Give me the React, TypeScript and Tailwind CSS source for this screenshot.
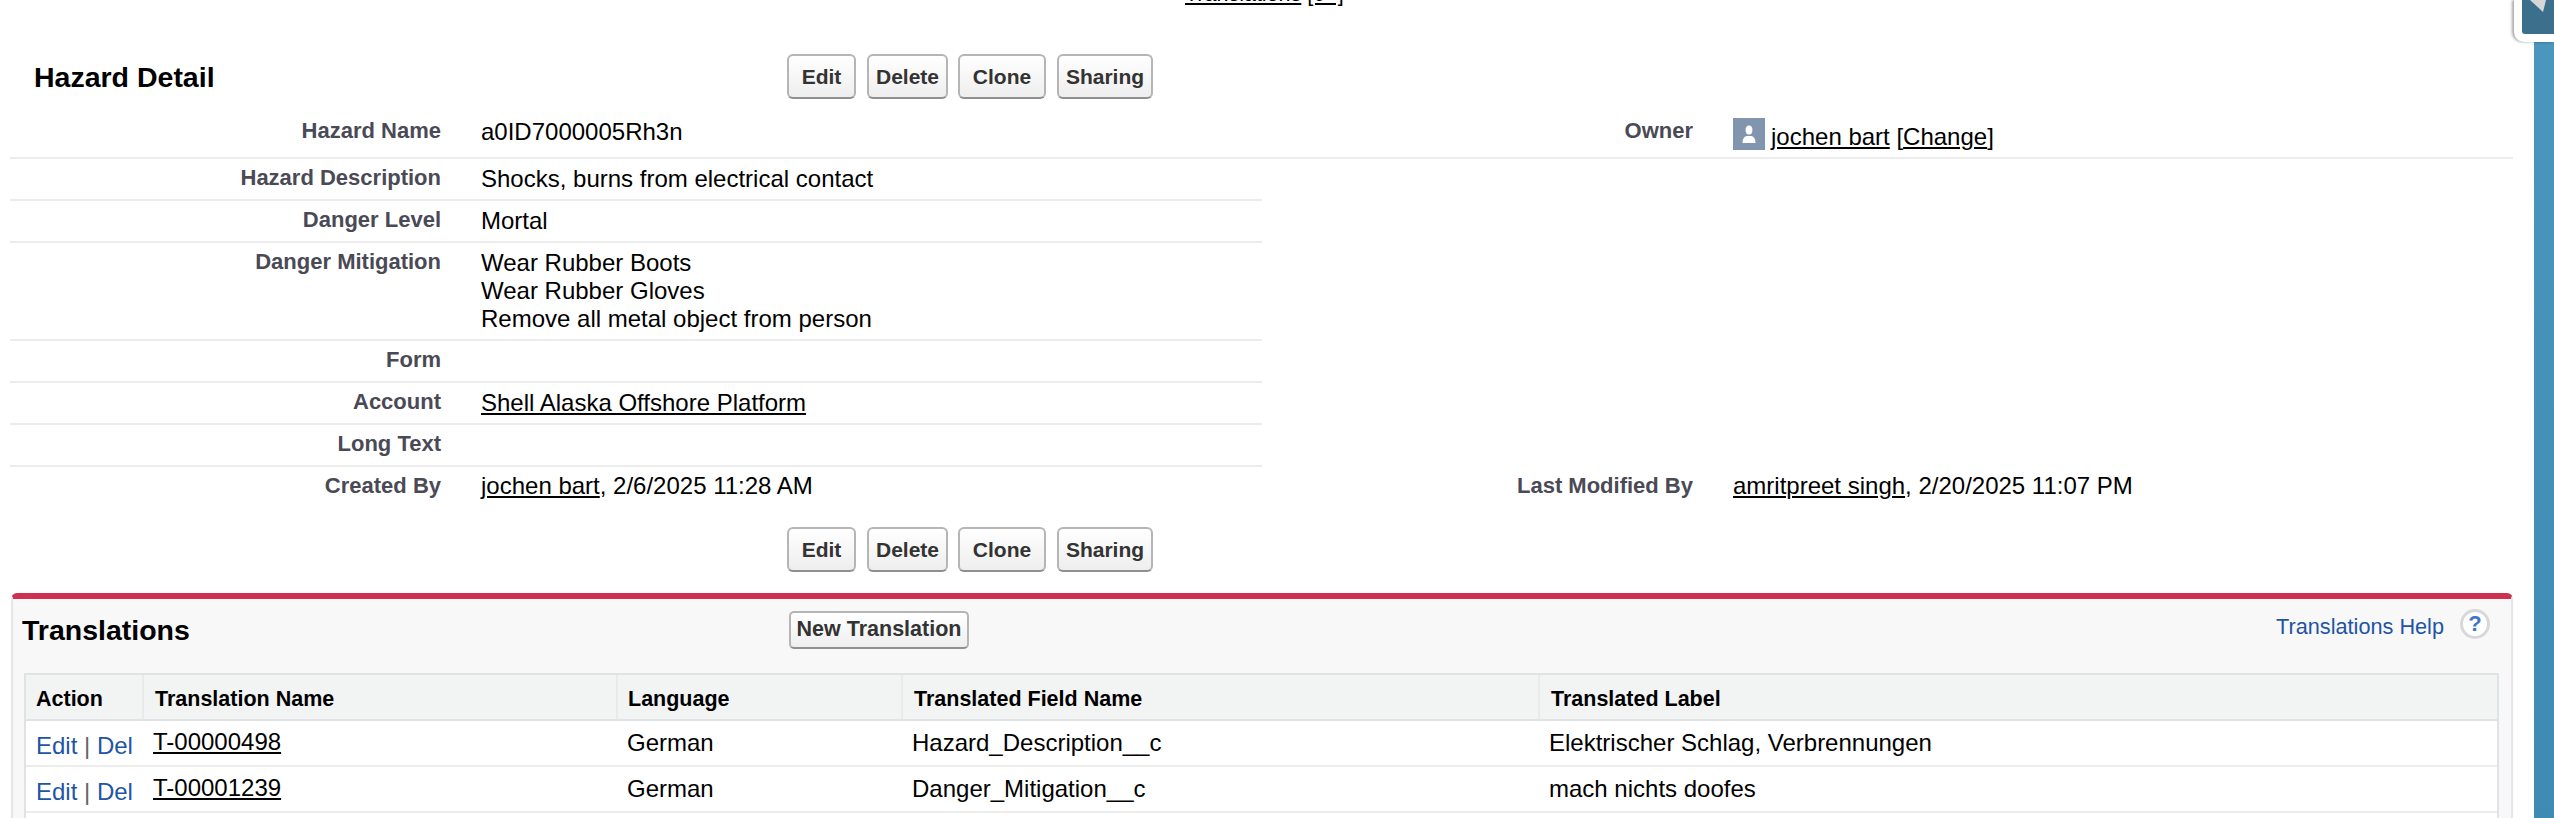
import React from "react";

const Btn = ({ label, cls }: { label: string; cls: string }) => (
  <button className={`h-[45px] rounded-[6px] border-2 border-[#b5b5b5] border-b-[#8f8f8f] bg-gradient-to-b from-[#ffffff] to-[#eeeeee] text-[21px] leading-none font-bold text-[#333333] ${cls}`}>
    {label}
  </button>
);

const Buttons = () => (
  <div className="flex">
    <Btn label="Edit" cls="w-[69px]" />
    <Btn label="Delete" cls="w-[81px] ml-[11px]" />
    <Btn label="Clone" cls="w-[88px] ml-[10px]" />
    <Btn label="Sharing" cls="w-[96px] ml-[11px]" />
  </div>
);

const A = ({ children }: { children: React.ReactNode }) => (
  <a className="underline decoration-2 underline-offset-2 text-black">{children}</a>
);

const Row = ({ label, children, h = "h-[42px]", line = true }: { label: string; children?: React.ReactNode; h?: string; line?: boolean }) => (
  <div className={`flex w-[1252px] ${h} ${line ? "border-b-2 border-[#ececec]" : ""}`}>
    <div className="w-[431px] pt-[5px] text-right text-[22px] leading-[28px] font-bold text-[#4a4a56]">{label}</div>
    <div className="ml-[40px] pt-[6px] text-[24px] leading-[28px] text-black">{children}</div>
  </div>
);

const cols = "grid grid-cols-[118px_474px_285px_637px_1fr]";

const TRow = ({ id, field, label }: { id: string; field: string; label: string }) => (
  <div className={`${cols} h-[46px] border-b-2 border-[#ececec] bg-white text-[24px] leading-[28px] text-black`}>
    <div className="pl-[10px] pt-[11px] whitespace-nowrap">
      <span className="text-[#1f55a5]">Edit</span>
      <span className="text-[#666666]"> | </span>
      <span className="text-[#1f55a5]">Del</span>
    </div>
    <div className="pl-[9px] pt-[7px]"><A>{id}</A></div>
    <div className="pl-[9px] pt-[8px]">German</div>
    <div className="pl-[9px] pt-[8px]">{field}</div>
    <div className="pl-[9px] pt-[8px]">{label}</div>
  </div>
);

const Th = ({ children, last = false, pl = "pl-[11px]" }: { children: string; last?: boolean; pl?: string }) => (
  <div className={`${pl} pt-[10px] text-[21.5px] leading-[28px] font-bold text-black ${last ? "" : "border-r-2 border-[#e8ebeb]"}`}>
    {children}
  </div>
);

export default function App() {
  return (
    <div className="relative flex h-[818px] w-[2554px] overflow-hidden bg-white font-['Liberation_Sans',Arial,sans-serif]">
      <div className="w-[2534px] shrink-0">
        <div className="h-[6px] overflow-hidden pl-[1185px]">
          <div className="-mt-[18px] text-[21.5px] leading-[24px] whitespace-nowrap text-black">
            <A>Translations</A> <A>[6+]</A>
          </div>
        </div>
        <div className="mt-[48px] flex h-[45px] items-center">
          <h2 className="w-[787px] pl-[34px] pt-[2px] text-[28.5px] leading-none font-bold text-black">Hazard Detail</h2>
          <Buttons />
        </div>
        <div className="mt-[17px] ml-[10px]">
          <div className="flex h-[43px] w-[2503px] border-b-2 border-[#ececec]">
            <div className="w-[431px] pt-[1px] text-right text-[22px] leading-[28px] font-bold text-[#4a4a56]">Hazard Name</div>
            <div className="ml-[40px] w-[773px] pt-[2px] text-[24px] leading-[28px] text-black">a0ID7000005Rh3n</div>
            <div className="w-[439px] pt-[1px] text-right text-[22px] leading-[28px] font-bold text-[#4a4a56]">Owner</div>
            <div className="ml-[40px] flex items-start pt-[2px] text-[24px] leading-[28px] text-black">
              <div className="flex h-[32px] w-[32px] items-center justify-center bg-[#8195ae]">
                <svg width="14" height="20" viewBox="0 0 14 20" fill="#ffffff">
                  <ellipse cx="7" cy="6" rx="3.4" ry="4.6" />
                  <path d="M0.5 19c0-4 1.5-6.5 4-7h5c2.500.5 4 3 4 7z" />
                </svg>
              </div>
              <div className="ml-[6px] pt-[5px] whitespace-nowrap">
                <A>jochen bart</A> [<A>Change</A>]
              </div>
            </div>
          </div>
          <Row label="Hazard Description">Shocks, burns from electrical contact</Row>
          <Row label="Danger Level">Mortal</Row>
          <Row label="Danger Mitigation" h="h-[98px]">
            Wear Rubber Boots<br />Wear Rubber Gloves<br />Remove all metal object from person
          </Row>
          <Row label="Form" />
          <Row label="Account"><A>Shell Alaska Offshore Platform</A></Row>
          <Row label="Long Text" />
          <div className="flex h-[42px] w-[2503px]">
            <div className="w-[431px] pt-[5px] text-right text-[22px] leading-[28px] font-bold text-[#4a4a56]">Created By</div>
            <div className="ml-[40px] w-[773px] pt-[5px] text-[24px] leading-[28px] text-black"><A>jochen bart</A>, 2/6/2025 11:28 AM</div>
            <div className="w-[439px] pt-[5px] text-right text-[22px] leading-[28px] font-bold text-[#4a4a56]">Last Modified By</div>
            <div className="ml-[40px] pt-[5px] text-[24px] leading-[28px] whitespace-nowrap text-black"><A>amritpreet singh</A>, 2/20/2025 11:07 PM</div>
          </div>
        </div>
        <div className="mt-[18px] pl-[787px]"><Buttons /></div>
        <div className="mt-[21px] ml-[11px] h-[240px] w-[2502px] rounded-t-[6px] border-x-2 border-t-[6px] border-x-[#e4e6e8] border-t-[#cf304f] bg-[#f8f8f8]">
          <div className="flex h-[38px] mt-[12px] items-center">
            <h3 className="w-[776px] pl-[9px] text-[28.5px] leading-none font-bold text-black">Translations</h3>
            <button className="h-[38px] w-[180px] rounded-[5px] border-2 border-[#b5b5b5] border-b-[#8f8f8f] bg-gradient-to-b from-[#ffffff] to-[#eeeeee] text-[21.5px] leading-none font-bold text-[#333333]">
              New Translation
            </button>
            <div className="-mt-[13px] ml-auto mr-[21px] flex items-center">
              <span className="mt-[6px] text-[21.7px] leading-[28px] text-[#1f55a5]">Translations Help</span>
              <div className="ml-[16px] flex h-[30px] w-[30px] items-center justify-center rounded-full border-[3px] border-[#d6d8da] bg-white text-[22px] leading-none font-bold text-[#3f74c8]">?</div>
            </div>
          </div>
          <div className="mt-[24px] ml-[11px] w-[2475px] border-x-2 border-t-2 border-[#e0e3e5]">
            <div className={`${cols} h-[46px] border-b-2 border-[#e0e3e5] bg-[#f2f3f3]`}>
              <Th pl="pl-[10px]">Action</Th>
              <Th>Translation Name</Th>
              <Th pl="pl-[10px]">Language</Th>
              <Th>Translated Field Name</Th>
              <Th last>Translated Label</Th>
            </div>
            <TRow id="T-00000498" field="Hazard_Description__c" label="Elektrischer Schlag, Verbrennungen" />
            <TRow id="T-00001239" field="Danger_Mitigation__c" label="mach nichts doofes" />
            <div className="h-[20px] bg-white" />
          </div>
        </div>
      </div>
      <div className="mt-[42px] flex-1 bg-gradient-to-b from-[#4a96bd] to-[#3f8ab2]" />
      <div className="absolute top-0 right-0 h-[42px] w-[40px] rounded-bl-[10px] bg-white pl-[8px] shadow-[-2px_0_3px_rgba(0,0,0,0.35)]">
        <div className="h-[34px] w-[32px] overflow-hidden rounded-bl-[3px] bg-[#3c6f8c]">
          <svg width="32" height="34" viewBox="0 0 32 34"><path d="M8 0h16l-3 12z" fill="#d6d6d6" /></svg>
        </div>
      </div>
    </div>
  );
}
